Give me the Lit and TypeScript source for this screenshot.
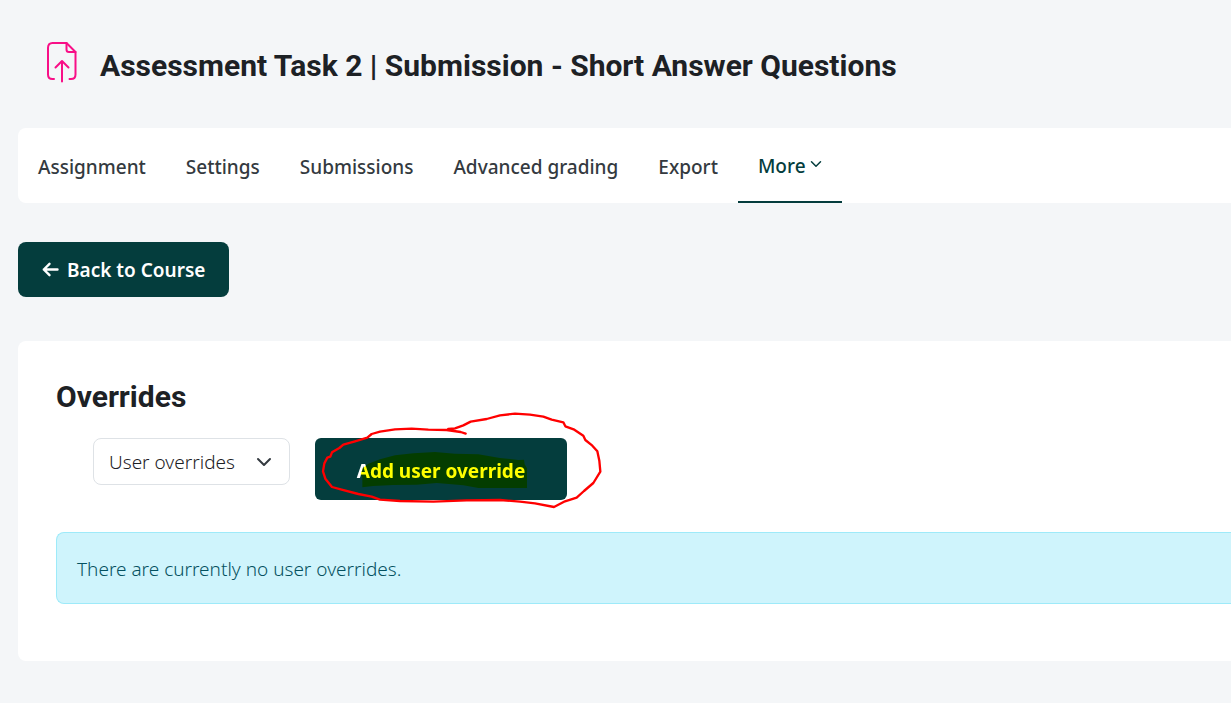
import { LitElement, html, css, svg } from "lit";
import { customElement, state } from "lit/decorators.js";

const chevron = svg`<path d="M2 5 L8 11 L14 5" fill="none" stroke="currentColor" stroke-width="2" stroke-linecap="round" stroke-linejoin="round"/>`;

@customElement("app-root")
export class AppRoot extends LitElement {
  static styles = css`
    :host {
      display: block;
      min-height: 100vh;
      box-sizing: border-box;
      padding: 0 0 40px 18px;
      background: #f4f6f8;
      color: #1d2125;
      font-family: "Segoe UI", "Noto Sans", "Open Sans", sans-serif;
      font-size: 19px;
      font-weight: 350;
      line-height: 28px;
    }
    * {
      box-sizing: border-box;
    }
    header {
      display: flex;
      align-items: center;
      gap: 22px;
      height: 128px;
      padding: 4px 28px 0;
    }
    .file-icon {
      width: 32px;
      height: 42px;
      margin-bottom: 8px;
      flex: none;
    }
    h1,
    h2 {
      margin: 0;
      font-family: Roboto, sans-serif;
      font-weight: 700;
      font-size: 30px;
      line-height: 36px;
    }
    nav {
      display: flex;
      height: 75px;
      background: #fff;
      border-radius: 8px 0 0 8px;
    }
    .tab {
      display: flex;
      align-items: center;
      padding: 2px 20px 0;
      color: #343a40;
      font-weight: 500;
      text-decoration: none;
      white-space: nowrap;
    }
    .tab.active {
      gap: 4px;
      border-bottom: 2px solid #043d3d;
      color: #043d3d;
    }
    .tab svg {
      width: 12px;
      height: 12px;
      margin-bottom: 4px;
    }
    .back {
      display: inline-flex;
      align-items: center;
      gap: 8px;
      height: 55px;
      margin: 39px 0 44px;
      padding: 0 24px;
      border-radius: 8px;
      background: #043d3d;
      color: #fff;
      font-weight: 600;
      text-decoration: none;
    }
    .back svg {
      width: 17px;
      height: 16px;
    }
    main {
      padding: 38px 0 57px 38px;
      background: #fff;
      border-radius: 8px 0 0 8px;
    }
    .controls {
      display: flex;
      align-items: flex-start;
      gap: 25px;
      margin: 23px 0 32px;
      padding-left: 37px;
    }
    .picker {
      display: grid;
      align-items: center;
      width: 197px;
    }
    .picker > * {
      grid-area: 1 / 1;
    }
    select {
      appearance: none;
      width: 100%;
      height: 47px;
      padding: 0 15px;
      border: 1px solid #dee2e6;
      border-radius: 8px;
      background: #fff;
      color: #1d2125;
      font: inherit;
    }
    .picker svg {
      justify-self: end;
      width: 16px;
      height: 16px;
      margin-right: 18px;
      color: #343a40;
      pointer-events: none;
    }
    .marked {
      position: relative;
      isolation: isolate;
    }
    .add {
      display: block;
      width: 252px;
      height: 62px;
      padding: 4px 0 0;
      border: 0;
      border-radius: 6px;
      background: #043d3d;
      color: #fff;
      font: inherit;
      font-weight: 700;
    }
    .ink {
      position: absolute;
      left: -15px;
      top: -38px;
      width: 310px;
      height: 120px;
      pointer-events: none;
    }
    .highlight {
      mix-blend-mode: multiply;
    }
    .alert {
      padding: 22px 20px 20px;
      border: 1px solid #9eeaf9;
      border-right: 0;
      border-radius: 8px 0 0 8px;
      background: #cff4fc;
      color: #055160;
    }
  `;

  @state() private kind = "user";

  private tabs = ["Assignment", "Settings", "Submissions", "Advanced grading", "Export"];

  private changeKind(e: Event) {
    this.kind = (e.target as HTMLSelectElement).value;
  }

  render() {
    return html`
      <header>
        <svg class="file-icon" viewBox="0 0 32 42" fill="none" stroke="#f80f87" stroke-width="2" stroke-linecap="round" stroke-linejoin="round" aria-hidden="true">
          <path d="M8 38 H6.5 C3.5 38 2 36.5 2 33.5 V7 C2 4 3.5 2 6.5 2 H20.5 L29.5 11 V33.5 C29.5 36.5 28 38 25 38 H23.5" />
          <path d="M20.5 2 V8.5 C20.5 10.2 21.3 11 23 11 H29.5" />
          <path d="M16 40.5 V20.5 M9.5 26.5 L16 20 L22.5 26.5" />
        </svg>
        <h1>Assessment Task 2 | Submission - Short Answer Questions</h1>
      </header>
      <nav aria-label="Assignment">
        ${this.tabs.map((t) => html`<a class="tab" href="#">${t}</a>`)}
        <a class="tab active" href="#" aria-current="page">More
          <svg viewBox="0 0 16 16" aria-hidden="true">${chevron}</svg>
        </a>
      </nav>
      <a class="back" href="#">
        <svg viewBox="0 0 17 16" fill="none" stroke="currentColor" stroke-width="2.4" stroke-linecap="round" stroke-linejoin="round" aria-hidden="true">
          <path d="M15.5 7.5 H1.8 M7.5 1.8 L1.8 7.5 L7.5 13.2" />
        </svg>
        Back to Course
      </a>
      <main>
        <h2>Overrides</h2>
        <div class="controls">
          <div class="picker">
            <select aria-label="Override type" .value=${this.kind} @change=${this.changeKind}>
              <option value="user">User overrides</option>
              <option value="group">Group overrides</option>
            </select>
            <svg viewBox="0 0 16 16" aria-hidden="true">${chevron}</svg>
          </div>
          <div class="marked">
            <button class="add" type="button">Add user override</button>
            <svg class="ink highlight" viewBox="0 0 930 360" aria-hidden="true">
              <path fill="#ff0" d="M187 262 V233 L182 222 L188 205 L205 191 L240 178 L285 166 L340 160 L405 156 L465 161 L535 163 L600 174 L655 180 L672 179 L674 193 L681 205 V264 H535 L490 256 L410 249 L350 254 L280 255 L220 258 Z" />
            </svg>
            <svg class="ink" viewBox="0 0 930 360" fill="none" stroke="#f00" stroke-width="7" stroke-linecap="round" stroke-linejoin="round" aria-hidden="true">
              <path d="M497 101 L482 96 L440 90 L385 89 L335 86 L285 88 L240 95 L215 102 L202 113 L165 124 L130 134 L118 144 L96 157 L91 170 L82 173 L73 190 L69 214 L76 236 L96 261 L125 269 L175 282 L215 290 L240 299 L300 303 L400 305 L500 301 L600 300 L660 305 L705 310 L762 321 L795 304 L830 293 L852 273 L880 249 L901 215 L898 182 L892 154 L877 137 L856 120 L850 107 L823 89 L796 79 L790 67 L755 59 L730 50 L690 44 L645 41 L600 46 L560 57 L512 65 L490 76 L465 85 L445 87" />
            </svg>
          </div>
        </div>
        <div class="alert" role="alert">There are currently no ${this.kind} overrides.</div>
      </main>
    `;
  }
}
